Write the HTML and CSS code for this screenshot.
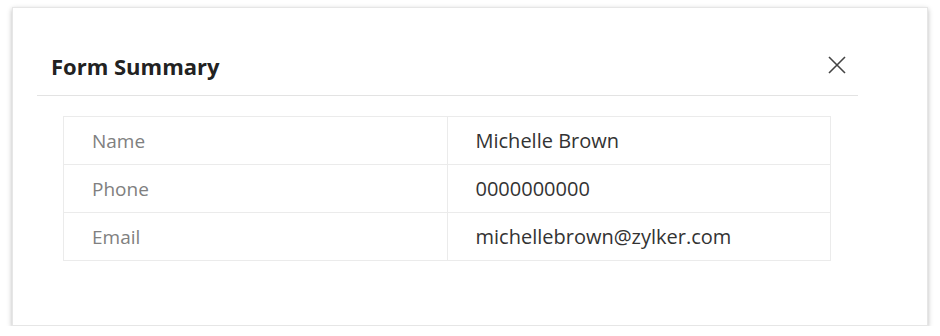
FILE: index.html
```html
<!DOCTYPE html>
<html lang="en">
<head>
  <meta charset="UTF-8" />
  <meta name="viewport" content="width=device-width, initial-scale=1" />
  <title>Form Summary</title>
  <link rel="stylesheet" href="styles.css">
</head>
<body>
  <div class="dialog">
    <div class="dialog-inner">
      <header class="dialog-header">
        <h2>Form Summary</h2>
        <button class="close-btn" aria-label="Close">
          <svg width="18" height="18" viewBox="0 0 18 18" aria-hidden="true">
            <path d="M1 1 L17 17 M17 1 L1 17" stroke="#444" stroke-width="1.6" fill="none" />
          </svg>
        </button>
      </header>
      <table class="summary">
        <tr>
          <td class="label">Name</td>
          <td class="value">Michelle Brown</td>
        </tr>
        <tr>
          <td class="label">Phone</td>
          <td class="value">0000000000</td>
        </tr>
        <tr>
          <td class="label">Email</td>
          <td class="value">michellebrown@zylker.com</td>
        </tr>
      </table>
    </div>
  </div>
</body>
</html>
```

FILE: styles.css
```css
body {
  font-family: "Open Sans", Arial, sans-serif;
  background-color: #fff;
  margin: 0;
  padding: 7px 12px 0;
  color: #333;
}
.dialog {
  height: 319px;
  border: 1px solid #e6e6e6;
  box-sizing: border-box;
  box-shadow: 0 2px 5px rgba(0,0,0,0.28);
  background: white;
}
.dialog-inner {
  margin: 0 69px 0 24px;
}
.dialog-header {
  display: flex;
  align-items: center;
  justify-content: space-between;
  height: 88px;
  padding: 18px 12px 0 14px;
  border-bottom: 1px solid #e3e3e3;
  box-sizing: border-box;
}
.dialog-header h2 {
  margin: 10px 0 0;
  font-size: 22px;
  font-weight: 700;
  color: #222;
}
.close-btn {
  background: none;
  border: none;
  padding: 0;
  margin-top: 8px;
  cursor: pointer;
  display: flex;
}
.summary {
  width: calc(100% - 53px);
  margin: 20px 0 0 26px;
  border-collapse: collapse;
  table-layout: fixed;
}
.summary td {
  height: 48px;
  padding: 0 28px;
  border: 1px solid #ebebeb;
  box-sizing: border-box;
}
.summary .label {
  color: #808080;
  font-size: 19px;
}
.summary .value {
  color: #333;
  font-size: 20px;
}
```
